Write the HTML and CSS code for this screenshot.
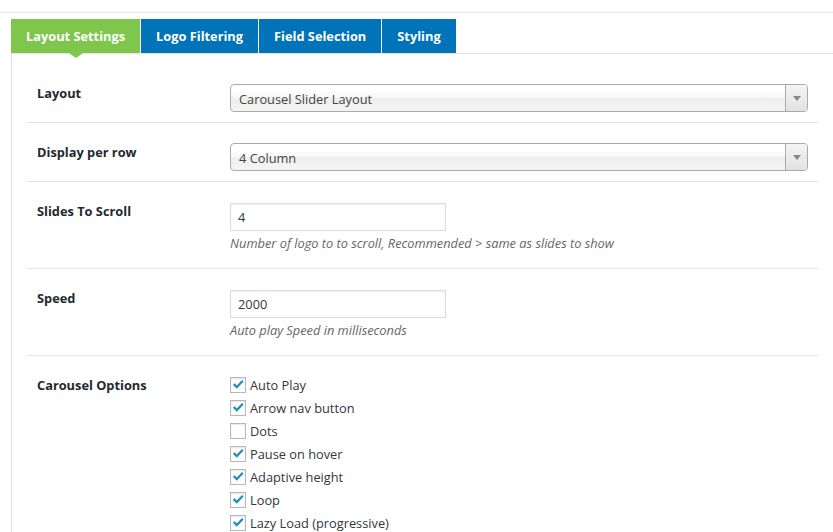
FILE: index.html
```html
<!DOCTYPE html>
<html>
<head>
<meta charset="utf-8">
<link rel="stylesheet" href="styles.css">
</head>
<body>
<div class="topbar"></div>
<div class="wrap">
  <div class="tabs">
    <div class="tab active">Layout Settings</div>
    <div class="tab">Logo Filtering</div>
    <div class="tab">Field Selection</div>
    <div class="tab">Styling</div>
  </div>
  <div class="panel">
    <div class="row">
      <div class="label">Layout</div>
      <div class="field">
        <div class="select"><span class="select-text">Carousel Slider Layout</span><span class="select-arrow"><span class="tri"></span></span></div>
      </div>
    </div>
    <div class="row">
      <div class="label">Display per row</div>
      <div class="field">
        <div class="select"><span class="select-text">4 Column</span><span class="select-arrow"><span class="tri"></span></span></div>
      </div>
    </div>
    <div class="row">
      <div class="label">Slides To Scroll</div>
      <div class="field">
        <div class="input">4</div>
        <p class="desc">Number of logo to to scroll, Recommended &gt; same as slides to show</p>
      </div>
    </div>
    <div class="row">
      <div class="label">Speed</div>
      <div class="field">
        <div class="input">2000</div>
        <p class="desc">Auto play Speed in milliseconds</p>
      </div>
    </div>
    <div class="row last">
      <div class="label">Carousel Options</div>
      <div class="field">
        <ul class="options">
          <li class="opt"><span class="cb"><svg viewBox="0 0 16 16"><path d="M2.2 7.6 L4.1 5.9 L6.6 8.5 L12.6 2.2 L14.4 4 L6.6 12.3 Z"/></svg></span>Auto Play</li>
          <li class="opt"><span class="cb"><svg viewBox="0 0 16 16"><path d="M2.2 7.6 L4.1 5.9 L6.6 8.5 L12.6 2.2 L14.4 4 L6.6 12.3 Z"/></svg></span>Arrow nav button</li>
          <li class="opt"><span class="cb"></span>Dots</li>
          <li class="opt"><span class="cb"><svg viewBox="0 0 16 16"><path d="M2.2 7.6 L4.1 5.9 L6.6 8.5 L12.6 2.2 L14.4 4 L6.6 12.3 Z"/></svg></span>Pause on hover</li>
          <li class="opt"><span class="cb"><svg viewBox="0 0 16 16"><path d="M2.2 7.6 L4.1 5.9 L6.6 8.5 L12.6 2.2 L14.4 4 L6.6 12.3 Z"/></svg></span>Adaptive height</li>
          <li class="opt"><span class="cb"><svg viewBox="0 0 16 16"><path d="M2.2 7.6 L4.1 5.9 L6.6 8.5 L12.6 2.2 L14.4 4 L6.6 12.3 Z"/></svg></span>Loop</li>
          <li class="opt"><span class="cb"><svg viewBox="0 0 16 16"><path d="M2.2 7.6 L4.1 5.9 L6.6 8.5 L12.6 2.2 L14.4 4 L6.6 12.3 Z"/></svg></span>Lazy Load (progressive)</li>
        </ul>
      </div>
    </div>
  </div>
</div>
</body>
</html>
```
FILE: styles.css
```css
* { box-sizing: border-box; }
html, body {
  margin: 0;
  padding: 0;
  background: #fff;
  font-family: "Open Sans", Lato, sans-serif;
  font-size: 12.8px;
  color: #32373c;
  overflow: hidden;
}
.topbar {
  height: 13px;
  border-bottom: 1px solid #e5e5e5;
}
.wrap {
  padding-top: 6px;
  padding-left: 11px;
}
.tabs {
  display: flex;
  gap: 1px;
  height: 34px;
  position: relative;
  z-index: 1;
}
.tab {
  background: #0073b9;
  color: #fff;
  font-weight: 700;
  line-height: 34px;
  padding: 0 15px;
  position: relative;
}
.tab.active {
  background: #7fc64d;
}
.tab.active::after {
  content: "";
  position: absolute;
  left: 50%;
  top: 34px;
  margin-left: -7px;
  border-left: 7px solid transparent;
  border-right: 7px solid transparent;
  border-top: 5px solid #7fc64d;
}
.panel {
  border-top: 1px solid #e5e5e5;
  border-left: 1px solid #e5e5e5;
  padding: 10px 15px 0 15px;
}
.row {
  display: grid;
  grid-template-columns: 203px 1fr;
  padding: 20px 0 10px 0;
  border-bottom: 1px solid #e5e5e5;
}
.row.last { border-bottom: 0; }
.label {
  padding-left: 10px;
  font-weight: 700;
  line-height: 18px;
  color: #23282d;
}
.field {
  padding-right: 10px;
}
.select {
  display: flex;
  height: 28px;
  border: 1px solid #aaa;
  border-radius: 4px;
  background: linear-gradient(#fff 20%, #f6f6f6 50%, #eee 52%, #f4f4f4 100%);
  overflow: hidden;
}
.select-text {
  flex: 1;
  padding: 1px 0 0 8px;
  line-height: 26px;
  color: #444;
}
.select-arrow {
  width: 22px;
  border-left: 1px solid #aaa;
  background: linear-gradient(#f4f4f4, #e2e2e2);
  display: flex;
  align-items: center;
  justify-content: center;
}
.tri {
  width: 0;
  height: 0;
  border-left: 4px solid transparent;
  border-right: 4px solid transparent;
  border-top: 5px solid #888;
}
.input {
  margin-top: 1px;
  width: 216px;
  height: 28px;
  border: 1px solid #ddd;
  box-shadow: inset 0 1px 2px rgba(0,0,0,.07);
  padding-left: 7px;
  line-height: 26px;
  color: #32373c;
}
.desc {
  margin: 3px 0 6px 0;
  font-style: italic;
  line-height: 18px;
  color: #666;
}
.options {
  list-style: none;
  margin: -3px 0 0 0;
  padding: 0;
}
.opt {
  display: flex;
  align-items: center;
  height: 23px;
  gap: 4px;
}
.cb {
  width: 16px;
  height: 16px;
  border: 1px solid #b4b9be;
  background: #fff;
  box-shadow: inset 0 1px 2px rgba(0,0,0,.1);
  display: flex;
  align-items: center;
  justify-content: center;
}
.cb svg {
  width: 14px;
  height: 14px;
  fill: #1e8cbe;
}
```
